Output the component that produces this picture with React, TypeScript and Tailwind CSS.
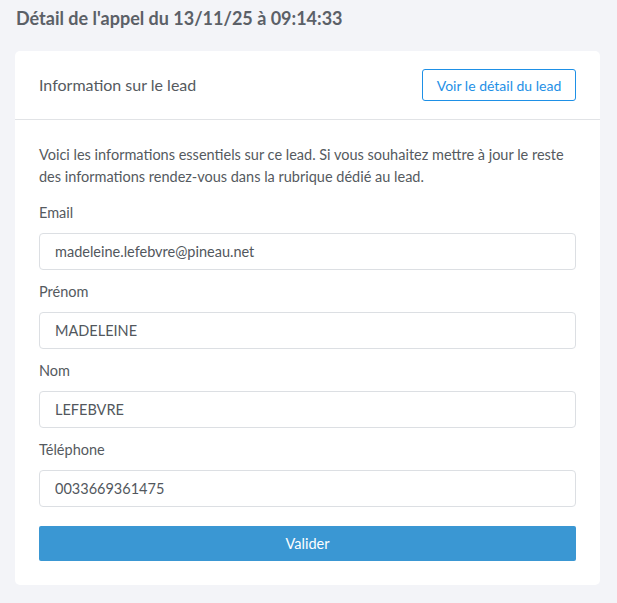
import React from "react";

const fields = [
  { label: "Email", value: "madeleine.lefebvre@pineau.net" },
  { label: "Prénom", value: "MADELEINE" },
  { label: "Nom", value: "LEFEBVRE" },
  { label: "Téléphone", value: "0033669361475" },
];

export default function App() {
  return (
    <div
      className="min-h-[603px] w-[617px] bg-[#f3f4f8] pl-[15px] pr-[17px] pt-[6px] pb-[17px] text-[#52575d]"
      style={{ fontFamily: "Lato, 'Open Sans', sans-serif" }}
    >
      <h1 className="pl-px text-[18px] leading-[24px] font-bold text-[#5b6067]">
        Détail de l'appel du 13/11/25 à 09:14:33
      </h1>

      <div className="mt-[21px] rounded-[5px] bg-white">
        <div className="flex items-center justify-between border-b border-[#e1e3e6] px-6 pt-[18px] pb-[18px]">
          <h2 className="text-[16px] font-normal text-[#555a60]">Information sur le lead</h2>
          <button className="h-[32px] w-[154px] rounded-[3px] border border-[#1e90e6] bg-white text-[14px] text-[#1e90e6]">
            Voir le détail du lead
          </button>
        </div>

        <div className="px-6 pt-6 pb-6">
          <p className="text-[14.5px] leading-[22px] text-[#555a60]">
            Voici les informations essentiels sur ce lead. Si vous souhaitez mettre à jour le reste des informations
            rendez-vous dans la rubrique dédié au lead.
          </p>

          <div className="mt-[15px] flex flex-col gap-[12px]">
            {fields.map((f) => (
              <div key={f.label} className="flex flex-col">
                <label className="mb-[10px] text-[14.5px] leading-[20px] text-[#555a60]">{f.label}</label>
                <input
                  readOnly
                  value={f.value}
                  className="h-[37px] rounded-[4px] border border-[#dcdfe3] px-[15px] text-[14.5px] text-[#52575d] outline-none"
                />
              </div>
            ))}
          </div>

          <button className="mt-[19px] h-[35px] w-full rounded-[2px] bg-[#3a97d3] text-[14.5px] text-white">
            Valider
          </button>
        </div>
      </div>
    </div>
  );
}
